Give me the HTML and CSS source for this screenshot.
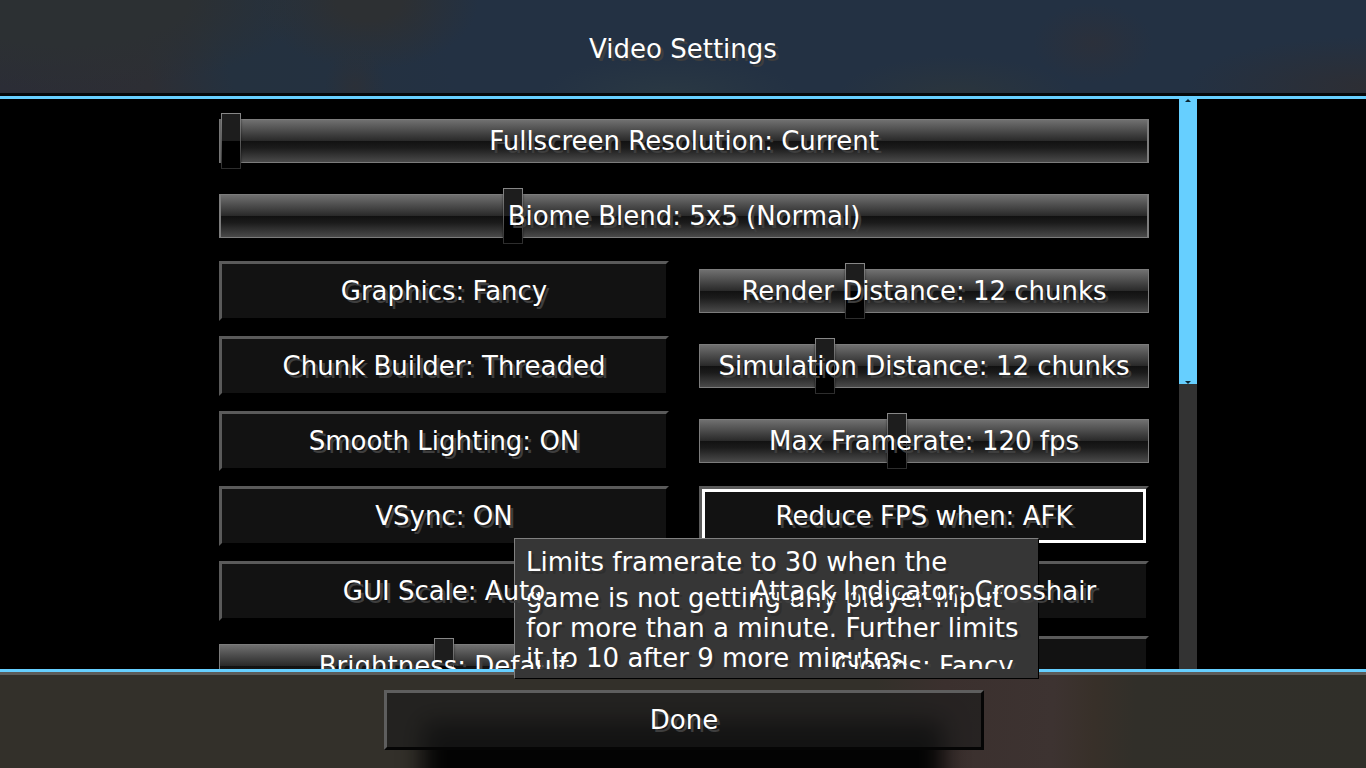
FILE: index.html
```html
<!DOCTYPE html>
<html lang="en">

<head>
    <meta charset="UTF-8">
    <title>Video Settings</title>
    <link rel="stylesheet" href="styles.css">
</head>

<body>
    <header class="header">
        <h1>Video Settings</h1>
    </header>

    <main class="list">
        <div class="options">
            <label class="slider wide">
                <input type="range" min="0" max="100" step="any" value="0">
                <span class="text">Fullscreen Resolution: Current</span>
            </label>
            <label class="slider wide">
                <input type="range" min="0" max="100" step="any" value="31.1">
                <span class="text">Biome Blend: 5x5 (Normal)</span>
            </label>
            <button class="option"><span class="text">Graphics: Fancy</span></button>
            <label class="slider">
                <input type="range" min="0" max="100" step="any" value="33.9">
                <span class="text">Render Distance: 12 chunks</span>
            </label>
            <button class="option"><span class="text">Chunk Builder: Threaded</span></button>
            <label class="slider">
                <input type="range" min="0" max="100" step="any" value="26.9">
                <span class="text">Simulation Distance: 12 chunks</span>
            </label>
            <button class="option"><span class="text">Smooth Lighting: ON</span></button>
            <label class="slider">
                <input type="range" min="0" max="100" step="any" value="43.7">
                <span class="text">Max Framerate: 120 fps</span>
            </label>
            <button class="option"><span class="text">VSync: ON</span></button>
            <button class="option selected" aria-describedby="tooltip"><span class="text">Reduce FPS when: AFK</span></button>
            <button class="option"><span class="text">GUI Scale: Auto</span></button>
            <button class="option"><span class="text">Attack Indicator: Crosshair</span></button>
            <label class="slider">
                <input type="range" min="0" max="100" step="any" value="50">
                <span class="text">Brightness: Default</span>
            </label>
            <button class="option"><span class="text">Clouds: Fancy</span></button>
        </div>
        <div class="scrollbar">
            <div class="scroll-thumb">
                <svg width="6" height="3" viewBox="0 0 6 3"><path d="M0 3L3 0L6 3Z"/></svg>
                <svg width="6" height="3" viewBox="0 0 6 3"><path d="M0 0H6L3 3Z"/></svg>
            </div>
        </div>
    </main>

    <footer class="footer">
        <button class="option done"><span class="text">Done</span></button>
    </footer>

    <div class="tooltip" id="tooltip" role="tooltip">
        <span class="first">Limits framerate to 30 when the</span>
        <span>game is not getting any player input</span>
        <span>for more than a minute. Further limits</span>
        <span>it to 10 after 9 more minutes.</span>
    </div>
</body>

</html>
```
FILE: styles.css
```css
* {
    box-sizing: border-box;
}
body {
    position: relative;
    display: flex;
    flex-direction: column;
    height: 100vh;
    margin: 0;
    overflow: hidden;
    background-color: #000;
    color: #fff;
    font-family: 'DejaVu Sans', sans-serif;
    font-size: 26px;
    line-height: 30px;
    text-shadow: 3px 3px 0 #3e3e3e;
}
button {
    padding: 0;
    color: inherit;
    font: inherit;
    text-shadow: inherit;
}

/* header */
.header {
    padding: 34px 0 32px;
    border-bottom: 3px solid #66cfff;
    box-shadow: inset 0 -3px 0 #05080a;
    background-color: #233143;
    background-image:
        radial-gradient(ellipse 60px 40px at 80% 45%, rgba(44, 48, 58, 0.9), transparent),
        radial-gradient(ellipse 120px 40px at 70% 100%, rgba(45, 54, 59, 0.8), transparent),
        radial-gradient(ellipse 180px 50px at 100% 90%, #2d2e34, transparent),
        radial-gradient(ellipse 130px 40px at 49% 100%, rgba(43, 57, 67, 0.9), transparent),
        radial-gradient(ellipse 30px 40px at 26% 90%, #2b3038, transparent),
        radial-gradient(ellipse 110px 70px at 27% 0, #2d3033 30%, transparent),
        radial-gradient(ellipse 240px 90px at 5% 0, #2c3033 50%, transparent),
        linear-gradient(75deg, #2b2d36 0, #2d2e34 11%, #24313f 17%, #243140 25%, #233143 33%);
}
.header h1 {
    margin: 0;
    font-size: 26px;
    font-weight: normal;
    text-align: center;
}

/* option list */
.list {
    flex: 1;
    display: grid;
    grid-template-columns: 1fr minmax(0, 930px) 1fr;
    min-height: 0;
    padding-left: 2px;
    overflow: hidden;
}
.options {
    grid-column: 2;
    display: grid;
    grid-template-columns: 1fr 1fr;
    grid-auto-rows: 60px;
    gap: 15px 30px;
    height: 0;
    padding-top: 12px;
}
.text {
    position: relative;
    z-index: 3;
    white-space: nowrap;
    pointer-events: none;
}
.option {
    border: 3px solid;
    border-color: #5a5a5a #000 #000 #5a5a5a;
    background-color: #121212;
}
.selected {
    box-shadow: inset 0 0 0 3px #fff;
}
.slider {
    display: grid;
    align-items: center;
    justify-items: center;
}
.slider input,
.slider .text {
    grid-area: 1 / 1;
}
.slider input {
    appearance: none;
    width: 100%;
    height: 60px;
    margin: 0;
    background: none;
}
.slider input::-webkit-slider-runnable-track {
    height: 44px;
    border: 1px solid #7c7c7c;
    background: linear-gradient(#707070, #2a2a2a 49%, #111 50%, #1b1b1b 66%, #4a4a4a);
}
.slider input::-webkit-slider-thumb {
    appearance: none;
    width: 20px;
    height: 56px;
    margin-top: -7px;
    border: 1px solid transparent;
    background:
        linear-gradient(#1d1d1d 50%, #000 50%) padding-box,
        linear-gradient(#888, #2c2c2c) border-box;
    box-shadow: 0 0 2px rgba(0, 0, 0, 0.6);
}
.wide {
    grid-column: 1 / 3;
}
.wide input::-webkit-slider-runnable-track {
    border-width: 1px 2px;
}

/* scrollbar */
.scrollbar {
    grid-column: 3;
    width: 18px;
    margin-left: 30px;
    background-color: #333;
}
.scroll-thumb {
    display: flex;
    flex-direction: column;
    align-items: center;
    justify-content: space-between;
    height: 50%;
    background-color: #66cfff;
}
.scroll-thumb svg {
    display: block;
    fill: #0c2733;
}

/* footer */
.footer {
    position: relative;
    display: flex;
    justify-content: center;
    padding: 18px 0 18px 2px;
    border-top: 3px solid #66cfff;
    box-shadow: inset 0 3px 0 #5c5c5a;
    overflow: hidden;
    background: linear-gradient(92deg, #33302a 0, #33302a 64%, #3b302e 69%, #3d3331 77%, #383029 80%, #312f29 83%, #302f29);
}
/* dark shape behind the Done button */
.footer::before {
    content: '';
    position: absolute;
    top: 50px;
    bottom: -40px;
    left: 31%;
    width: 38%;
    background-color: #030303;
    filter: blur(12px);
}
.done {
    position: relative;
    width: 600px;
    height: 60px;
    border-color: #5e5e5e #050505 #050505 #5e5e5e;
    background-color: rgba(28, 28, 28, 0.65);
}

/* tooltip */
.tooltip {
    position: absolute;
    top: 538px;
    left: 514px;
    z-index: 2;
    padding: 8px 10px 5px 11px;
    width: 525px;
    border: 1px solid;
    border-color: #808080 #000 #000 #808080;
    background-color: #363636;
    text-shadow: 3px 3px 0 #2e2e2e;
}
.tooltip span {
    display: block;
    white-space: nowrap;
}
.tooltip .first {
    margin-bottom: 6px;
}
```
